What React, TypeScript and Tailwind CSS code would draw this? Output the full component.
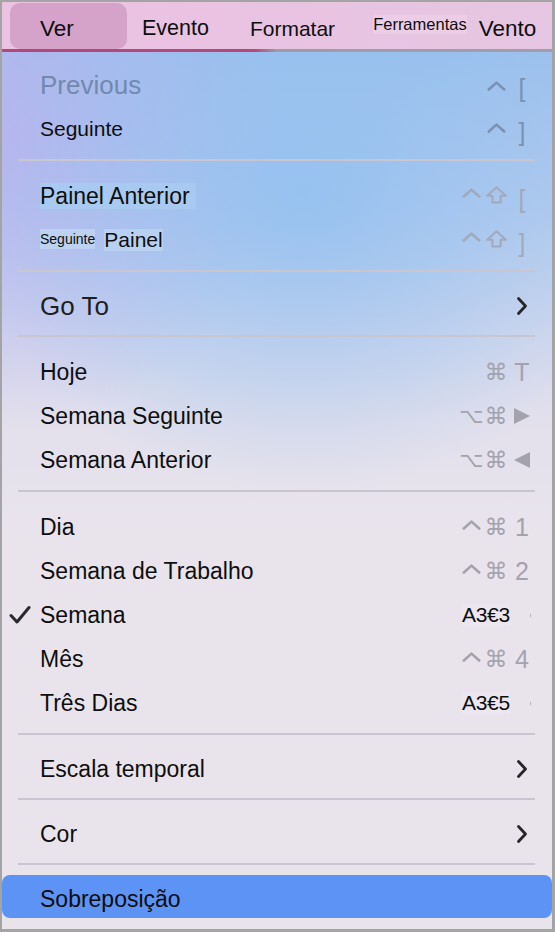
import React from 'react';

type Key = React.ReactNode;

const sans = { fontFamily: '"Liberation Sans", Arial, sans-serif' };

const Caret = ({ color, up = 'translate-y-[-3px]' }: { color: string; up?: string }) => (
  <svg className={up} width="19" height="10" viewBox="0 0 19 10" fill="none">
    <polyline points="1.8,8.5 9.5,1.6 17.2,8.5" stroke={color} strokeWidth="2.6" strokeLinecap="round" strokeLinejoin="round" />
  </svg>
);

const Shift = ({ color }: { color: string }) => (
  <svg className="translate-y-[-1px]" width="21" height="18" viewBox="0 0 21 18" fill="none">
    <path d="M10.5 1.3 L19.8 9.8 H14.6 V16.6 H6.4 V9.8 H1.2 Z" stroke={color} strokeWidth="2" strokeLinejoin="round" />
  </svg>
);

const Tri = ({ dir, color }: { dir: 'r' | 'l'; color: string }) => (
  <svg width="18" height="18" viewBox="0 0 18 18">
    {dir === 'r' ? <polygon points="1,1 17,9 1,17" fill={color} /> : <polygon points="17,1 1,9 17,17" fill={color} />}
  </svg>
);

const Chevron = () => (
  <svg width="12" height="20" viewBox="0 0 12 20" fill="none">
    <polyline points="2.5,2.5 9.5,10 2.5,17.5" stroke="#262626" strokeWidth="2.8" strokeLinecap="round" strokeLinejoin="round" />
  </svg>
);

const Check = () => (
  <svg width="22" height="20" viewBox="0 0 22 20" fill="none">
    <polyline points="2,10.5 8,17 20,2.5" stroke="#2a2a2a" strokeWidth="3" strokeLinecap="round" strokeLinejoin="round" />
  </svg>
);

const Cmd = ({ color }: { color: string }) => (
  <span className="text-[23px] leading-none" style={{ fontFamily: '"DejaVu Sans", sans-serif', color }}>⌘</span>
);

const Opt = ({ color }: { color: string }) => (
  <span className="text-[21px] leading-none" style={{ fontFamily: '"DejaVu Sans", sans-serif', color }}>⌥</span>
);

const Ch = ({ c, color, size = 'text-[25px]', shift = '' }: { c: string; color: string; size?: string; shift?: string }) => (
  <span className={`${size} ${shift} leading-none`} style={{ ...sans, color }}>{c}</span>
);

const Bracket = ({ c, color }: { c: string; color: string }) => (
  <Ch c={c} color={color} shift="translate-y-[3px]" />
);

const Shortcut = ({ keys }: { keys: [Key, Key, Key] }) => (
  <div className="grid grid-cols-[24px_26px_26px] items-center">
    {keys.map((k, i) => (
      <div key={i} className="flex items-center justify-center">{k}</div>
    ))}
  </div>
);

const Row = ({
  label,
  right,
  h = 'h-[44px]',
  size = 'text-[23px]',
  check,
}: {
  label: React.ReactNode;
  right?: React.ReactNode;
  h?: string;
  size?: string;
  check?: boolean;
}) => (
  <div className={`relative flex items-center ${h} pl-[38px] pr-[17px]`}>
    {check && (
      <div className="absolute left-[7px] top-1/2 -translate-y-1/2">
        <Check />
      </div>
    )}
    <div className={`flex-1 ${size} text-[#0e0e0e]`} style={sans}>{label}</div>
    <div className="w-[76px] flex justify-end">{right}</div>
  </div>
);

const Sep = ({ pb = 'pb-[13px]' }: { pb?: string }) => (
  <div className={`pt-[8px] ${pb} pl-[16px] pr-[17px]`}>
    <div className="h-[2px] bg-[#c9c6d1]" />
  </div>
);

const Odd = ({ text }: { text: string }) => (
  <div className="flex items-center w-[76px] pl-[3px]">
    <span className="text-[21px] tracking-[-0.3px] text-[#0e0e0e] bg-[#ebe6f0] leading-[22px]" style={sans}>{text}</span>
    <span className="ml-auto mr-[4px] w-[1px] h-[3px] bg-[#b9b6c0]" />
  </div>
);

export default function App() {
  const top = '#7b91b3';
  const mid = '#a1a9ba';
  const g = '#a4a2ad';

  return (
    <div className="w-[555px] h-[932px] overflow-hidden border-l-2 border-t-2 border-r-[3px] border-b-[3px] border-[#a4a4a4] flex flex-col bg-[#e9e4ec]">
      {/* menu bar */}
      <div className="h-[47px] flex items-center bg-[linear-gradient(90deg,#ebc2e2,#e8c4e1_60%,#e6c6e2)] text-[#0e0e0e]" style={sans}>
        <div className="ml-[8px] mt-[1px] h-[46px] w-[117px] rounded-[10px] bg-[#d5a3c9] flex items-center pl-[30px]">
          <span className="text-[22.5px] pt-[6px]">Ver</span>
        </div>
        <span className="ml-[15px] text-[21.5px] pt-[6px]">Evento</span>
        <span className="ml-[41px] text-[21px] pt-[6px]">Formatar</span>
        <span className="ml-[38px] self-start mt-[13px] text-[16.5px] leading-[19px] bg-[#eccde6]">Ferramentas</span>
        <span className="ml-[12px] text-[22.5px] pt-[6px]">Vento</span>
      </div>
      <div className="h-[3px] bg-[linear-gradient(90deg,#b2487a_0%,#b24b7b_46%,#9f9ba8_50%,#a19eab_100%)]" />

      {/* menu */}
      <div className="flex-1 flex flex-col pt-[11px] bg-[image:radial-gradient(ellipse_62%_34%_at_55%_16%,rgba(146,192,240,0.85),rgba(146,192,240,0)),radial-gradient(circle_at_0%_10%,rgba(188,178,238,0.85),rgba(188,178,238,0)_30%),linear-gradient(180deg,#9dc1ec_0%,#b5cbee_18%,#d3d8ed_32%,#e3e0ec_42%,#e9e4ec_55%,#e9e4ec_100%)]">
        <Row
          label={<span className="text-[#7189ac] text-[26px]">Previous</span>}
          right={<Shortcut keys={[null, <Caret color={top} up="translate-y-[1px]" />, <Bracket c="[" color={top} />]} />}
        />
        <Row
          size="text-[21px]"
          label="Seguinte"
          right={<Shortcut keys={[null, <Caret color={top} up="translate-y-[-1px]" />, <Bracket c="]" color={top} />]} />}
        />
        <Sep />
        <Row
          size="text-[23px]"
          label={<span className="bg-[#a9caf0] pr-[6px]">Painel Anterior</span>}
          right={<Shortcut keys={[<Caret color={mid} />, <Shift color={mid} />, <Bracket c="[" color={mid} />]} />}
        />
        <Row
          label={
            <span className="flex items-start">
              <span className="text-[14px] leading-[20px] bg-[#bcd2f0]">Seguinte</span>
              <span className="ml-[9px] text-[21px] leading-[22px] bg-[#b9d1f0]">Painel</span>
            </span>
          }
          right={<Shortcut keys={[<Caret color={mid} />, <Shift color={mid} />, <Bracket c="]" color={mid} />]} />}
        />
        <Sep />
        <Row
          h="h-[42px]"
          size="text-[26px]"
          label={<span className="text-[#1e1e1e]">Go To</span>}
          right={<Shortcut keys={[null, null, <Chevron />]} />}
        />
        <Sep />
        <Row label="Hoje" right={<Shortcut keys={[null, <Cmd color={g} />, <Ch c="T" color={g} />]} />} />
        <Row
          label="Semana Seguinte"
          right={<Shortcut keys={[<Opt color={g} />, <Cmd color={g} />, <Tri dir="r" color={g} />]} />}
        />
        <Row
          label="Semana Anterior"
          right={<Shortcut keys={[<Opt color={g} />, <Cmd color={g} />, <Tri dir="l" color={g} />]} />}
        />
        <Sep />
        <Row label="Dia" right={<Shortcut keys={[<Caret color={g} up="translate-y-[-2px]" />, <Cmd color={g} />, <Ch c="1" color={g} />]} />} />
        <Row
          label="Semana de Trabalho"
          right={<Shortcut keys={[<Caret color={g} up="translate-y-[-2px]" />, <Cmd color={g} />, <Ch c="2" color={g} />]} />}
        />
        <Row check label="Semana" right={<Odd text="A3€3" />} />
        <Row label="Mês" right={<Shortcut keys={[<Caret color={g} up="translate-y-[-2px]" />, <Cmd color={g} />, <Ch c="4" color={g} />]} />} />
        <Row label="Três Dias" right={<Odd text="A3€5" />} />
        <Sep />
        <Row h="h-[42px]" label="Escala temporal" right={<Shortcut keys={[null, null, <Chevron />]} />} />
        <Sep />
        <Row h="h-[42px]" label="Cor" right={<Shortcut keys={[null, null, <Chevron />]} />} />
        <Sep pb="pb-[10px]" />
        <div className="h-[43px] rounded-[8px] bg-[#5d93f5] flex items-center pl-[38px] pt-[6px]">
          <span className="text-[23px] text-[#0e0e0e]" style={sans}>Sobreposição</span>
        </div>
      </div>
    </div>
  );
}
